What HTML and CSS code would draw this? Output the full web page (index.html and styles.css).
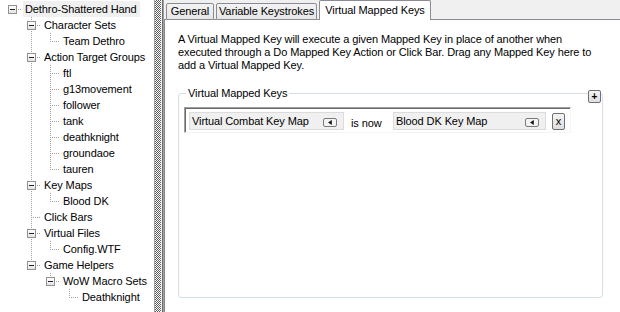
FILE: index.html
```html
<!DOCTYPE html>
<html>
<head>
<meta charset="utf-8">
<link rel="stylesheet" href="styles.css">
</head>
<body>
<div class="app">
  <div class="tree">
    <ul class="root">
      <li class="top">
        <div class="node"><span class="exp"></span><span class="label sel">Dethro-Shattered Hand</span></div>
        <ul>
          <li class="child">
            <div class="node"><span class="exp"></span><span class="label">Character Sets</span></div>
            <ul>
              <li class="child"><div class="node"><span class="label">Team Dethro</span></div></li>
            </ul>
          </li>
          <li class="child">
            <div class="node"><span class="exp"></span><span class="label">Action Target Groups</span></div>
            <ul>
              <li class="child"><div class="node"><span class="label">ftl</span></div></li>
              <li class="child"><div class="node"><span class="label">g13movement</span></div></li>
              <li class="child"><div class="node"><span class="label">follower</span></div></li>
              <li class="child"><div class="node"><span class="label">tank</span></div></li>
              <li class="child"><div class="node"><span class="label">deathknight</span></div></li>
              <li class="child"><div class="node"><span class="label">groundaoe</span></div></li>
              <li class="child"><div class="node"><span class="label">tauren</span></div></li>
            </ul>
          </li>
          <li class="child">
            <div class="node"><span class="exp"></span><span class="label">Key Maps</span></div>
            <ul>
              <li class="child"><div class="node"><span class="label">Blood DK</span></div></li>
            </ul>
          </li>
          <li class="child"><div class="node"><span class="label">Click Bars</span></div></li>
          <li class="child">
            <div class="node"><span class="exp"></span><span class="label">Virtual Files</span></div>
            <ul>
              <li class="child"><div class="node"><span class="label">Config.WTF</span></div></li>
            </ul>
          </li>
          <li class="child">
            <div class="node"><span class="exp"></span><span class="label">Game Helpers</span></div>
            <ul>
              <li class="child">
                <div class="node"><span class="exp"></span><span class="label">WoW Macro Sets</span></div>
                <ul>
                  <li class="child"><div class="node"><span class="label">Deathknight</span></div></li>
                </ul>
              </li>
            </ul>
          </li>
        </ul>
      </li>
    </ul>
  </div>
  <div class="splitter"><div class="checker"></div></div>
  <div class="tabctl">
    <div class="tabstrip">
      <div class="fill lead"></div>
      <div class="tab t-general">General</div>
      <div class="fill gap"></div>
      <div class="tab t-var">Variable Keystrokes</div>
      <div class="fill gap1"></div>
      <div class="tab active">Virtual Mapped Keys</div>
      <div class="fill rest"></div>
    </div>
    <div class="page">
      <p class="desc">A Virtual Mapped Key will execute a given Mapped Key in place of another when<br>executed through a Do Mapped Key Action or Click Bar. Drag any Mapped Key here to<br>add a Virtual Mapped Key.</p>
      <div class="groupwrap">
        <fieldset class="group">
          <legend>Virtual Mapped Keys</legend>
          <div class="maprow">
            <div class="keybox kb1"><span class="kname">Virtual Combat Key Map</span><span class="mini"><svg width="14" height="9" viewBox="0 0 14 9"><rect x="0.5" y="0.5" width="13" height="8" rx="1.5" fill="#f4f4f4" stroke="#7a7a7a"/><path d="M8.5 2.5 L5.5 4.5 L8.5 6.5 Z" fill="#111" stroke="#111" stroke-width="0.6"/></svg></span></div>
            <span class="isnow">is now</span>
            <div class="keybox kb2"><span class="kname">Blood DK Key Map</span><span class="mini"><svg width="14" height="9" viewBox="0 0 14 9"><rect x="0.5" y="0.5" width="13" height="8" rx="1.5" fill="#f4f4f4" stroke="#7a7a7a"/><path d="M8.5 2.5 L5.5 4.5 L8.5 6.5 Z" fill="#111" stroke="#111" stroke-width="0.6"/></svg></span></div>
            <button class="xbtn">x</button>
          </div>
        </fieldset>
        <button class="addbtn">+</button>
      </div>
    </div>
  </div>
</div>
</body>
</html>
```
FILE: styles.css
```css
html, body {
  margin: 0;
  padding: 0;
  background: #fff;
}
body {
  font-family: "Liberation Sans", Arial, sans-serif;
  font-size: 11px;
  letter-spacing: -0.1px;
  color: #000;
}
.app {
  display: flex;
  width: 620px;
  height: 312px;
  overflow: hidden;
}

/* ---------- tree ---------- */
.tree {
  width: 154px;
  flex: none;
  background: #fff;
  padding-top: 1px;
  box-sizing: border-box;
}
.tree ul {
  list-style: none;
  margin: 0;
  padding: 0 0 0 19px;
}
.tree ul.root {
  padding-left: 0;
}
.tree li {
  position: relative;
}
.tree li.child::before {
  content: "";
  position: absolute;
  left: 12px;
  top: 0;
  bottom: 0;
  width: 1px;
  background: repeating-linear-gradient(to bottom, #a0a0a0 0 1px, transparent 1px 2px);
}
.tree li.child:last-child::before {
  bottom: auto;
  height: 9px;
}
.node {
  position: relative;
  height: 16px;
  line-height: 16px;
  padding-left: 23px;
  white-space: nowrap;
}
.node::before {
  content: "";
  position: absolute;
  left: 12px;
  top: 8px;
  width: 10px;
  height: 1px;
  background: repeating-linear-gradient(to right, #a0a0a0 0 1px, transparent 1px 2px);
}
.label {
  display: inline-block;
  padding: 0 2px;
  height: 16px;
}
.label.sel {
  background: #f0f0f0;
  padding-right: 3px;
}
.exp {
  position: absolute;
  left: 8px;
  top: 4px;
  width: 9px;
  height: 9px;
  box-sizing: border-box;
  border: 1px solid #919191;
  background: linear-gradient(#ffffff, #e4e4e4);
  z-index: 1;
}
.exp::after {
  content: "";
  position: absolute;
  left: 1px;
  top: 3px;
  width: 5px;
  height: 1px;
  background: #222;
}

/* ---------- splitter ---------- */
.splitter {
  width: 9px;
  flex: none;
  display: flex;
  border-left: 1px solid #a0a0a0;
  border-right: 1px solid #6d6d6d;
  box-sizing: border-box;
  background: #f0f0f0;
}
.checker {
  width: 6px;
  background-color: #fff;
  background-image: conic-gradient(#5a5a5a 25%, #fff 0 50%, #5a5a5a 0 75%, #fff 0);
  background-size: 2px 2px;
}

/* ---------- tabs ---------- */
.tabctl {
  flex: 1;
  display: flex;
  flex-direction: column;
  background: #f0f0f0;
  border-left: 1px solid #a0a0a0;
}
.tabstrip {
  display: flex;
  align-items: flex-end;
  height: 20px;
  flex: none;
}
.fill {
  height: 0;
  border-bottom: 1px solid #898c95;
}
.fill.lead { width: 2px; }
.fill.gap { width: 2px; }
.fill.gap1 { width: 2px; }
.fill.rest { flex: 1; }
.tab {
  box-sizing: border-box;
  height: 17px;
  line-height: 15px;
  text-align: center;
  border: 1px solid #898c95;
  border-radius: 2px 2px 0 0;
  background: linear-gradient(#f3f3f3, #e6e6e6);
  white-space: nowrap;
}
.t-general { width: 48px; }
.t-var { width: 101px; }
.tab.active {
  width: 112px;
  height: 20px;
  line-height: 19px;
  border-bottom: none;
  background: #fff;
  padding-bottom: 1px;
}
.page {
  flex: 1;
  display: flex;
  flex-direction: column;
  background: #fff;
  border-left: 1px solid #898c95;
  padding: 13px 17px 14px 13px;
  box-sizing: border-box;
  min-height: 0;
}
.desc {
  margin: 0;
  line-height: 13px;
  white-space: nowrap;
}
.groupwrap {
  position: relative;
  flex: 1;
  display: flex;
  margin-top: 15px;
}
.group {
  flex: 1;
  margin: 0;
  padding: 7px 0 0 5px;
  border: 1px solid #d5dfe5;
  border-radius: 3px;
  min-width: 0;
}
.group legend {
  margin-left: 2px;
  padding: 0 2px;
  line-height: 13px;
}
.maprow {
  display: flex;
  align-items: center;
  width: 387px;
  box-sizing: border-box;
  padding: 4px 0 2px 3px;
  border-top: 1px solid #a0a0a0;
  border-left: 1px solid #a0a0a0;
  border-right: 1px solid #f4f4f4;
  border-bottom: 1px solid #f4f4f4;
  box-shadow: inset 1px 1px 0 #696969;
}
.keybox {
  display: flex;
  align-items: center;
  height: 18px;
  box-sizing: border-box;
  border: 1px solid #dcdcdc;
  background: #f0f0f0;
  padding: 0 6px 0 2px;
}
.kb1 { width: 155px; margin-left: 1px; }
.kb2 { width: 153px; }
.kname {
  flex: 1;
  white-space: nowrap;
}
.mini {
  display: flex;
  margin-top: 2px;
}
.isnow {
  width: 49px;
  padding-left: 7px;
  box-sizing: border-box;
  white-space: nowrap;
  margin-top: 3px;
}
.xbtn, .addbtn {
  font-family: "Liberation Sans", Arial, sans-serif;
  color: #000;
  border: 1px solid #707070;
  border-radius: 2px;
  background: linear-gradient(#f4f4f4, #dedede);
  padding: 0;
  box-sizing: border-box;
}
.xbtn {
  margin-left: 6px;
  width: 13px;
  height: 17px;
  font-size: 11px;
  line-height: 14px;
}
.addbtn {
  position: absolute;
  right: 2px;
  top: 3px;
  width: 13px;
  height: 13px;
  font-size: 10px;
  font-weight: bold;
  line-height: 10px;
}
```
